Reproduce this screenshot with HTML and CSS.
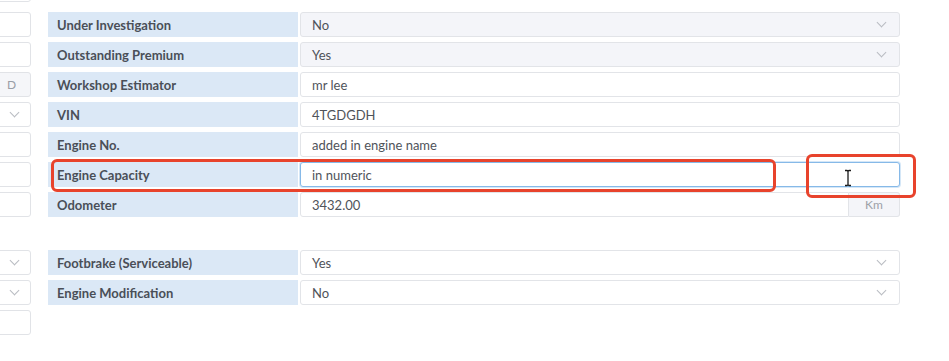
FILE: index.html
```html
<!DOCTYPE html>
<html>
<head>
<meta charset="utf-8">
<link rel="stylesheet" href="styles.css">
</head>
<body>
<div class="page">
  <div class="col-left">
    <div class="box first"></div>
    <div class="box"></div>
    <div class="box"></div>
    <div class="box muted"><span class="addon-text">D</span></div>
    <div class="box"><span class="chev"></span></div>
    <div class="box"></div>
    <div class="box"></div>
    <div class="box"></div>
    <div class="box sect"><span class="chev"></span></div>
    <div class="box"><span class="chev"></span></div>
    <div class="box"></div>
  </div>
  <div class="col-main">
    <div class="row">
      <div class="label">Under Investigation</div>
      <div class="field select"><span class="val">No</span><span class="chev"></span></div>
    </div>
    <div class="row">
      <div class="label">Outstanding Premium</div>
      <div class="field select"><span class="val">Yes</span><span class="chev"></span></div>
    </div>
    <div class="row">
      <div class="label">Workshop Estimator</div>
      <div class="field"><span class="val">mr lee</span></div>
    </div>
    <div class="row">
      <div class="label">VIN</div>
      <div class="field"><span class="val">4TGDGDH</span></div>
    </div>
    <div class="row">
      <div class="label">Engine No.</div>
      <div class="field"><span class="val">added in engine name</span></div>
    </div>
    <div class="row">
      <div class="label">Engine Capacity</div>
      <div class="field focus"><span class="val">in numeric</span></div>
    </div>
    <div class="row">
      <div class="label">Odometer</div>
      <div class="group">
        <div class="field grow"><span class="val">3432.00</span></div>
        <div class="unit">Km</div>
      </div>
    </div>
    <div class="row sect">
      <div class="label">Footbrake (Serviceable)</div>
      <div class="field"><span class="val">Yes</span><span class="chev"></span></div>
    </div>
    <div class="row">
      <div class="label">Engine Modification</div>
      <div class="field"><span class="val">No</span><span class="chev"></span></div>
    </div>
  </div>
  <div class="mark mark-a"></div>
  <div class="mark mark-b"></div>
  <svg class="ibeam" width="8" height="18" viewBox="0 0 8 18">
    <path d="M1 1.5 H3 Q4 1.5 4 3 V15 Q4 16.5 3 16.5 H1 M7 1.5 H5 Q4 1.5 4 3 M4 15 Q4 16.5 5 16.5 H7" fill="none" stroke="#1a1a1a" stroke-width="1.3"/>
  </svg>
</div>
</body>
</html>
```

FILE: styles.css
```css
html, body {
  margin: 0;
  padding: 0;
  background: #ffffff;
}

.page {
  position: relative;
  width: 949px;
  height: 361px;
  overflow: hidden;
  display: flex;
  align-items: flex-start;
  font-family: "Lato", "Open Sans", sans-serif;
  font-size: 13px;
  color: #4d525b;
}

.col-left {
  width: 131px;
  margin-left: -100px;
  margin-top: -23px;
  display: flex;
  flex-direction: column;
  gap: 5px;
}

.col-left .box {
  position: relative;
  height: 25px;
  box-sizing: border-box;
  border: 1px solid #e1e3e7;
  border-radius: 3px;
  background: #fff;
  display: flex;
  align-items: center;
  justify-content: flex-end;
  padding-right: 10px;
}

.col-left .box.first + .box {
  margin-top: 5px;
}

.col-left .box.muted {
  background: #f5f6f9;
  justify-content: flex-start;
  padding-left: 106px;
}

.col-left .box.sect {
  margin-top: 28px;
}

.addon-text {
  color: #9a9ea6;
  font-size: 12px;
}

.col-main {
  margin-left: 17px;
  margin-top: 12px;
  width: 852px;
  display: flex;
  flex-direction: column;
  gap: 5px;
}

.row {
  display: flex;
  height: 25px;
  gap: 2px;
}

.row.sect {
  margin-top: 28px;
}

.label {
  width: 250px;
  flex: none;
  box-sizing: border-box;
  background: #dbe8f6;
  padding-left: 9px;
  font-weight: 700;
  color: #4a4f58;
  display: flex;
  align-items: center;
  font-size: 13px;
}

.field {
  flex: 1;
  position: relative;
  box-sizing: border-box;
  border: 1px solid #e2e4e8;
  border-radius: 3px;
  background: #fff;
  display: flex;
  align-items: center;
  padding-left: 11px;
  padding-right: 12px;
  color: #4f535a;
}

.field.select {
  background: #f4f5f9;
}

.field.focus {
  border-color: #86b9e8;
  box-shadow: 0 0 0 1px rgba(134, 185, 232, 0.35);
}

.val {
  flex: 1;
}

.chev {
  width: 6px;
  height: 6px;
  border-right: 1px solid #b9bcc2;
  border-bottom: 1px solid #b9bcc2;
  transform: rotate(45deg);
  margin-top: -4px;
  margin-right: 2px;
}

.group {
  flex: 1;
  display: flex;
}

.group .field.grow {
  border-top-right-radius: 0;
  border-bottom-right-radius: 0;
}

.unit {
  width: 51px;
  box-sizing: border-box;
  border: 1px solid #e2e4e8;
  border-left: none;
  border-radius: 0 3px 3px 0;
  background: #f4f5f9;
  color: #9da1a8;
  font-size: 12px;
  display: flex;
  align-items: center;
  justify-content: center;
}

.mark {
  position: absolute;
  border: 3px solid #e8432c;
  border-radius: 6px;
  box-sizing: border-box;
}

.mark-a {
  left: 51px;
  top: 159px;
  width: 725px;
  height: 33px;
}

.mark-b {
  left: 806px;
  top: 154px;
  width: 110px;
  height: 44px;
}

.ibeam {
  position: absolute;
  left: 844px;
  top: 169px;
}
```
